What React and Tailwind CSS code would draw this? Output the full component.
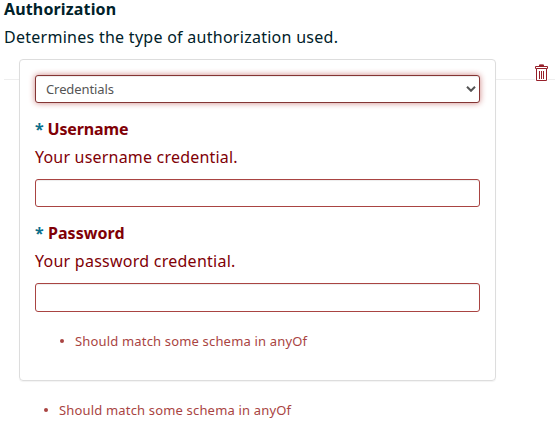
function Field({ label, description, labelSpacing, descriptionSpacing, inputClass }) {
  return (
    <label className="block text-[#800006]">
      <span className={`block h-7 whitespace-nowrap font-bold ${labelSpacing}`}>
        <span className="text-[#0b6e8a]">*</span> {label}
      </span>
      <span className={`block h-7 whitespace-nowrap ${descriptionSpacing}`}>{description}</span>
      <input
        type="text"
        className={`mt-2 block w-full rounded-[3px] border border-[#a94442] bg-white shadow-[inset_0_1px_1px_rgba(0,0,0,0.075)] outline-none ${inputClass}`}
      />
    </label>
  );
}

function ErrorItem() {
  return (
    <ul className="flex h-5 items-center text-[13px] leading-5 text-[#a94442]">
      <li className="flex items-center whitespace-nowrap tracking-[0.17px]">
        <span className="mr-[11px] size-1 rounded-full bg-[#a94442]" />
        Should match some schema in anyOf
      </li>
    </ul>
  );
}

function TrashIcon() {
  return (
    <svg width="13" height="17" viewBox="0 0 13 17" fill="none" stroke="#96202a">
      <path d="M4.5 2V.9h4V2" fill="#96202a" />
      <path d="M.5 2.5h12v2H.5z" fill="#fff" />
      <path d="M1.5 4.5h10v12h-10z" fill="#fff" />
      <path d="M4.5 7v8M6.5 7v8M8.5 7v8" />
    </svg>
  );
}

export default function App() {
  return (
    <main className="h-[440px] w-[555px] overflow-hidden bg-white pl-1 font-['Noto_Sans',sans-serif] text-base leading-7 text-[#002129]">
      <header className="h-[59px]">
        <h1 className="whitespace-nowrap pb-1 font-bold leading-[19px] tracking-[0.15px]">Authorization</h1>
        <p className="h-7 whitespace-nowrap tracking-[0.27px]">Determines the type of authorization used.</p>
      </header>
      <div className="flex h-[322px]">
        <div className="mt-5 h-px w-[15px] bg-[#eee]" />
        <section className="w-[477px] rounded border border-[#ddd] px-[15px] pt-[15px] shadow-[0_1px_1px_rgba(0,0,0,0.05)]">
          <div className="flex h-7 items-center justify-between rounded-[3px] border border-[#843534] bg-white pl-[10px] pr-[3px] text-[13px] text-[#555] shadow-[inset_0_1px_1px_rgba(0,0,0,0.075),0_0_6px_#ce8483]">
            <span className="tracking-[-0.1px]">Credentials</span>
            <svg width="10" height="6" viewBox="0 0 10 6" fill="none" stroke="#555" strokeWidth="2">
              <path d="m1 .8 4 4 4-4" />
            </svg>
          </div>
          <div className="mt-3 flex flex-col gap-3">
            <Field
              label="Username"
              description="Your username credential."
              labelSpacing="tracking-[-0.15px]"
              descriptionSpacing="tracking-[0.2px]"
              inputClass="h-7"
            />
            <Field
              label="Password"
              description="Your password credential."
              labelSpacing="tracking-[0.05px]"
              descriptionSpacing="tracking-[0.25px]"
              inputClass="h-[29px]"
            />
          </div>
          <div className="mt-[19px] pl-[25px]">
            <ErrorItem />
          </div>
        </section>
        <div className="mt-[5px] flex h-[17px] flex-1">
          <div className="mt-[15px] h-px w-[39px] bg-[#eee]" />
          <button type="button" aria-label="Remove" className="block h-[17px] w-[13px]">
            <TrashIcon />
          </button>
          <div className="mt-[15px] h-px flex-1 bg-[#eee]" />
        </div>
      </div>
      <div className="mt-[19px] pl-10">
        <ErrorItem />
      </div>
    </main>
  );
}
